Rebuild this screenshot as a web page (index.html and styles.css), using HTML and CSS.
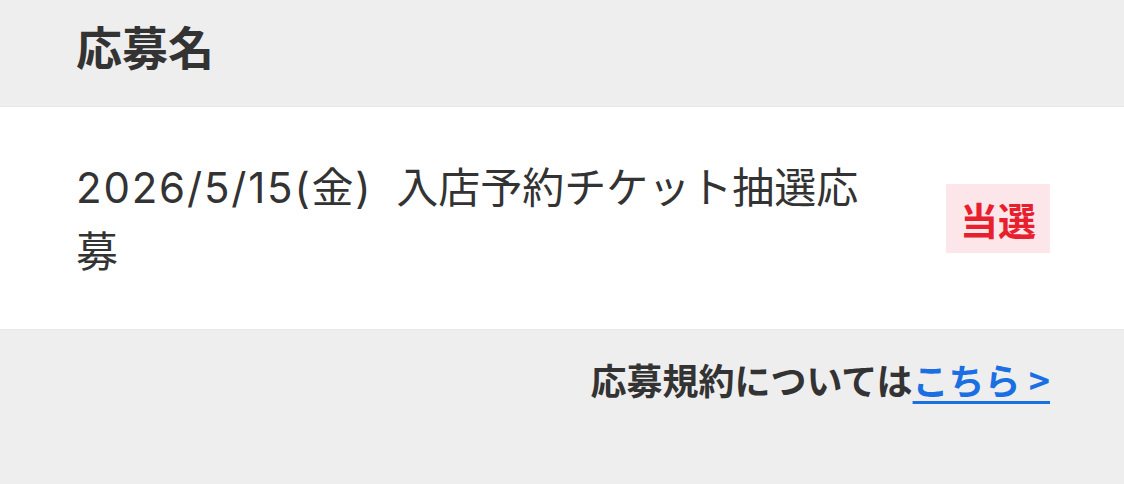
FILE: index.html
```html
<!DOCTYPE html>
<html lang="ja">
<head>
<meta charset="utf-8">
<link rel="stylesheet" href="styles.css">
</head>
<body>
<div class="page">
  <div class="head">
    <h2 class="title">応募名</h2>
  </div>
  <div class="row">
    <div class="name"><span class="date">2026/5/15(金)</span> 入店予約チケット抽選応募</div>
    <span class="badge">当選</span>
  </div>
  <div class="foot">
    <p class="terms">応募規約については<a class="link" href="#">こちら &gt;</a></p>
  </div>
</div>
</body>
</html>
```
FILE: styles.css
```css
html, body {
  margin: 0;
  padding: 0;
  background: #eeeeee;
}
.page {
  width: 1124px;
  height: 484px;
  font-family: "Noto Sans CJK JP", "Noto Sans", sans-serif;
  color: #333333;
  background: #eeeeee;
}
.head {
  height: 107px;
  box-sizing: border-box;
  padding: 22px 74px 0 76px;
  border-bottom: 1px solid #e6e6e6;
}
.title {
  margin: 0;
  font-size: 46px;
  line-height: 46px;
  font-weight: 700;
}
.row {
  background: #ffffff;
  height: 222px;
  box-sizing: border-box;
  padding: 0 74px 0 76px;
  display: flex;
  align-items: center;
  gap: 57px;
}
.name {
  flex: 1;
  font-family: "Inter", "Noto Sans CJK JP", sans-serif;
  font-size: 42px;
  line-height: 64px;
  font-weight: 400;
  padding-top: 4px;
  word-spacing: 12px;
}
.date {
  letter-spacing: 1.8px;
}
.badge {
  background: #fde6e9;
  color: #e8202e;
  font-weight: 700;
  font-size: 38px;
  line-height: 45px;
  padding: 12px 14px;
  white-space: nowrap;
}
.foot {
  border-top: 1px solid #e8e8e8;
  padding: 31px 74px 0 76px;
  text-align: right;
}
.terms {
  margin: 0;
  font-size: 36px;
  line-height: 36px;
  font-weight: 700;
}
.link {
  color: #1a6fe3;
  text-decoration: underline;
  text-decoration-thickness: 3px;
  text-underline-offset: 6px;
}
```
